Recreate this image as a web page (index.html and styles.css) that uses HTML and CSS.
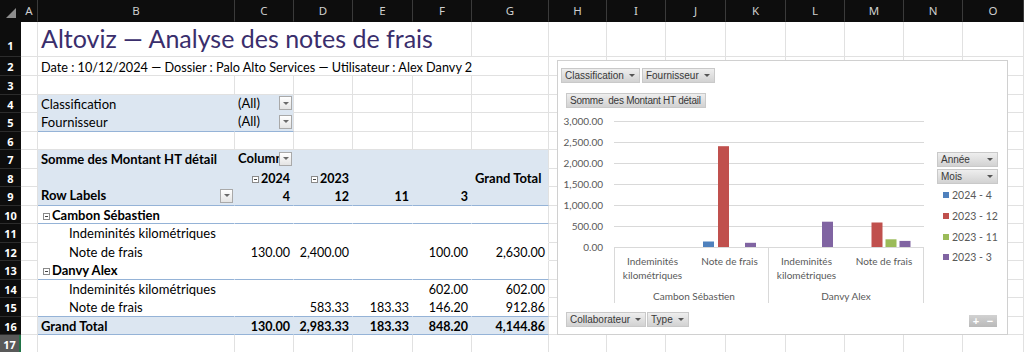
FILE: index.html
```html
<!DOCTYPE html>
<html lang="fr">
<head>
    <meta charset="UTF-8">
    <title>Altoviz — Analyse des notes de frais</title>
    <link rel="stylesheet" href="styles.css">
</head>
<body>

<div class="sheet">

    <div class="row head">
        <div class="corner"></div>
        <div>A</div><div>B</div><div>C</div><div>D</div><div>E</div><div>F</div><div>G</div>
        <div>H</div><div>I</div><div>J</div><div>K</div><div>L</div><div>M</div><div>N</div><div>O</div>
    </div>

    <div class="row r1">
        <div class="rh">1</div>
        <div></div>
        <div class="title">Altoviz — Analyse des notes de frais</div>
        <div></div>
        <div></div><div></div><div></div><div></div><div></div><div></div><div></div><div></div>
    </div>

    <div class="row r2">
        <div class="rh">2</div>
        <div></div>
        <div class="subtitle">Date : 10/12/2024 — Dossier : Palo Alto Services — Utilisateur : Alex Danvy 2</div>
        <div></div><div></div><div></div><div></div><div></div><div></div><div></div><div></div>
    </div>

    <div class="row">
        <div class="rh">3</div>
        <div></div><div></div><div></div><div></div><div></div><div></div><div></div>
        <div></div><div></div><div></div><div></div><div></div><div></div><div></div><div></div>
    </div>

    <div class="row">
        <div class="rh">4</div>
        <div></div>
        <div class="fill">Classification</div>
        <div class="fill pick edge"><span class="pick-text">(All)</span><span class="drop"></span></div>
        <div></div><div></div><div></div><div></div>
        <div></div><div></div><div></div><div></div><div></div><div></div><div></div><div></div>
    </div>

    <div class="row">
        <div class="rh">5</div>
        <div></div>
        <div class="fill line">Fournisseur</div>
        <div class="fill pick edge line"><span class="pick-text">(All)</span><span class="drop"></span></div>
        <div></div><div></div><div></div><div></div>
        <div></div><div></div><div></div><div></div><div></div><div></div><div></div><div></div>
    </div>

    <div class="row">
        <div class="rh">6</div>
        <div></div><div></div><div></div><div></div><div></div><div></div><div></div>
        <div></div><div></div><div></div><div></div><div></div><div></div><div></div><div></div>
    </div>

    <div class="row">
        <div class="rh">7</div>
        <div></div>
        <div class="fill bold">Somme des Montant HT détail</div>
        <div class="fill bold pick"><span class="pick-text">Column Labels</span><span class="drop"></span></div>
        <div class="fill"></div>
        <div class="fill"></div>
        <div class="fill"></div>
        <div class="fill edge"></div>
        <div></div><div></div><div></div><div></div><div></div><div></div><div></div><div></div>
    </div>

    <div class="row">
        <div class="rh">8</div>
        <div></div>
        <div class="fill"></div>
        <div class="fill bold num"><span class="tog"></span>2024</div>
        <div class="fill bold num"><span class="tog"></span>2023</div>
        <div class="fill"></div>
        <div class="fill"></div>
        <div class="fill bold edge">Grand Total</div>
        <div></div><div></div><div></div><div></div><div></div><div></div><div></div><div></div>
    </div>

    <div class="row">
        <div class="rh">9</div>
        <div></div>
        <div class="fill bold pick line"><span class="pick-text">Row Labels</span><span class="drop"></span></div>
        <div class="fill bold num line">4</div>
        <div class="fill bold num line">12</div>
        <div class="fill bold num line">11</div>
        <div class="fill bold num line">3</div>
        <div class="fill line edge"></div>
        <div></div><div></div><div></div><div></div><div></div><div></div><div></div><div></div>
    </div>

    <div class="row">
        <div class="rh">10</div>
        <div></div>
        <div class="body bold line"><span class="tog"></span>Cambon Sébastien</div>
        <div class="body line"></div>
        <div class="body line"></div>
        <div class="body line"></div>
        <div class="body line"></div>
        <div class="body line edge"></div>
        <div></div><div></div><div></div><div></div><div></div><div></div><div></div><div></div>
    </div>

    <div class="row">
        <div class="rh">11</div>
        <div></div>
        <div class="body sub">Indeminités kilométriques</div>
        <div class="body"></div>
        <div class="body"></div>
        <div class="body"></div>
        <div class="body"></div>
        <div class="body edge"></div>
        <div></div><div></div><div></div><div></div><div></div><div></div><div></div><div></div>
    </div>

    <div class="row">
        <div class="rh">12</div>
        <div></div>
        <div class="body sub">Note de frais</div>
        <div class="body num">130.00</div>
        <div class="body num">2,400.00</div>
        <div class="body num"></div>
        <div class="body num">100.00</div>
        <div class="body num edge">2,630.00</div>
        <div></div><div></div><div></div><div></div><div></div><div></div><div></div><div></div>
    </div>

    <div class="row">
        <div class="rh">13</div>
        <div></div>
        <div class="body bold line"><span class="tog"></span>Danvy Alex</div>
        <div class="body line"></div>
        <div class="body line"></div>
        <div class="body line"></div>
        <div class="body line"></div>
        <div class="body line edge"></div>
        <div></div><div></div><div></div><div></div><div></div><div></div><div></div><div></div>
    </div>

    <div class="row">
        <div class="rh">14</div>
        <div></div>
        <div class="body sub">Indeminités kilométriques</div>
        <div class="body num"></div>
        <div class="body num"></div>
        <div class="body num"></div>
        <div class="body num">602.00</div>
        <div class="body num edge">602.00</div>
        <div></div><div></div><div></div><div></div><div></div><div></div><div></div><div></div>
    </div>

    <div class="row">
        <div class="rh">15</div>
        <div></div>
        <div class="body sub line">Note de frais</div>
        <div class="body num line"></div>
        <div class="body num line">583.33</div>
        <div class="body num line">183.33</div>
        <div class="body num line">146.20</div>
        <div class="body num line edge">912.86</div>
        <div></div><div></div><div></div><div></div><div></div><div></div><div></div><div></div>
    </div>

    <div class="row">
        <div class="rh">16</div>
        <div></div>
        <div class="fill bold line">Grand Total</div>
        <div class="fill bold num line">130.00</div>
        <div class="fill bold num line">2,983.33</div>
        <div class="fill bold num line">183.33</div>
        <div class="fill bold num line">848.20</div>
        <div class="fill bold num line edge">4,144.86</div>
        <div></div><div></div><div></div><div></div><div></div><div></div><div></div><div></div>
    </div>

    <div class="row">
        <div class="rh on">17</div>
        <div></div><div></div><div></div><div></div><div></div><div></div><div></div>
        <div></div><div></div><div></div><div></div><div></div><div></div><div></div><div></div>
    </div>

    <!-- pivot chart floats over the sheet -->
    <div class="chart">
        <div class="chart-filters">
            <span class="field">Classification<i class="arrow"></i></span>
            <span class="field">Fournisseur<i class="arrow"></i></span>
        </div>
        <div class="chart-value">
            <span class="field tight">Somme  des Montant HT détail</span>
        </div>
        <div class="chart-body">
            <svg class="plot" width="370" height="196" viewBox="0 0 370 196">
                <g stroke="#d9d9d9" stroke-width="1">
                    <line x1="56" y1="11.5" x2="366" y2="11.5"/>
                    <line x1="56" y1="32.5" x2="366" y2="32.5"/>
                    <line x1="56" y1="53.5" x2="366" y2="53.5"/>
                    <line x1="56" y1="74.5" x2="366" y2="74.5"/>
                    <line x1="56" y1="95.5" x2="366" y2="95.5"/>
                    <line x1="56" y1="116.5" x2="366" y2="116.5"/>
                    <line x1="56" y1="137.5" x2="366" y2="137.5"/>
                    <line x1="56.5" y1="137" x2="56.5" y2="193"/>
                    <line x1="210.5" y1="137" x2="210.5" y2="193"/>
                    <line x1="365.5" y1="137" x2="365.5" y2="193"/>
                </g>
                <g class="axis" text-anchor="end">
                    <text x="45" y="15">3,000.00</text>
                    <text x="45" y="36">2,500.00</text>
                    <text x="45" y="57">2,000.00</text>
                    <text x="45" y="78">1,500.00</text>
                    <text x="45" y="99">1,000.00</text>
                    <text x="45" y="120">500.00</text>
                    <text x="45" y="141">0.00</text>
                </g>
                <!-- Cambon Sébastien / Note de frais -->
                <rect x="145" y="131.5" width="11" height="5.5" fill="#4f81bd"/>
                <rect x="160" y="36.2" width="11" height="100.8" fill="#c0504d"/>
                <rect x="187" y="132.8" width="11" height="4.2" fill="#8064a2"/>
                <!-- Danvy Alex / Indeminités kilométriques -->
                <rect x="264" y="111.7" width="11" height="25.3" fill="#8064a2"/>
                <!-- Danvy Alex / Note de frais -->
                <rect x="313.5" y="112.5" width="11" height="24.5" fill="#c0504d"/>
                <rect x="327.5" y="129.3" width="11" height="7.7" fill="#9bbb59"/>
                <rect x="341.5" y="130.9" width="11" height="6.1" fill="#8064a2"/>
                <g class="axis" text-anchor="middle">
                    <text x="94.5" y="155">Indeminités</text>
                    <text x="94.5" y="169">kilométriques</text>
                    <text x="171.5" y="155">Note de frais</text>
                    <text x="248.5" y="155">Indeminités</text>
                    <text x="248.5" y="169">kilométriques</text>
                    <text x="326" y="155">Note de frais</text>
                    <text x="136" y="190">Cambon Sébastien</text>
                    <text x="288" y="190">Danvy Alex</text>
                </g>
            </svg>
            <div class="legend">
                <span class="field">Année<i class="arrow"></i></span>
                <span class="field">Mois<i class="arrow"></i></span>
                <div class="key"><i class="swatch blue"></i>2024 - 4</div>
                <div class="key"><i class="swatch red"></i>2023 - 12</div>
                <div class="key"><i class="swatch green"></i>2023 - 11</div>
                <div class="key"><i class="swatch purple"></i>2023 - 3</div>
            </div>
        </div>
        <div class="chart-foot">
            <span class="field">Collaborateur<i class="arrow"></i></span>
            <span class="field">Type<i class="arrow"></i></span>
            <span class="zoom"><b>+</b><b>−</b></span>
        </div>
    </div>

</div>

</body>
</html>
```

FILE: styles.css
```css
body {
    margin: 0;
    background-color: #fff;
    font-family: Lato, "Liberation Sans", sans-serif;
    color: #000;
}

.sheet {
    position: relative;
    width: 1024px;
    height: 352px;
    overflow: hidden;
}

/* spreadsheet grid */

.row {
    display: grid;
    grid-template-columns: 21px 17px 197px 59px 59px 60px 59px 77px 58px 59px 60px 60px 59px 59px 59px 61px;
    height: 18.5px;
}

.row > div {
    box-sizing: border-box;
    border-right: 1px solid #e1e1e1;
    border-bottom: 1px solid #e1e1e1;
    padding: 1px 3px 0;
    font-size: 13px;
    line-height: 17px;
    white-space: nowrap;
    overflow: hidden;
}

.head {
    height: 22px;
}

.head > div {
    background-color: #0d0d0d;
    border-right-color: #3a3a3a;
    border-bottom-color: #0d0d0d;
    color: #cfcfcf;
    font-family: "Noto Sans", sans-serif;
    font-size: 11.5px;
    line-height: 21px;
    text-align: center;
    padding: 0;
}

.head > .corner {
    display: flex;
    justify-content: flex-end;
    align-items: flex-end;
    padding: 0 4px 3px 0;
    border-right-color: #0d0d0d;
}

.corner::after {
    content: "";
    width: 0;
    height: 0;
    border-left: 10px solid transparent;
    border-bottom: 10px solid #8c8c8c;
}

.row > .rh {
    background-color: #0d0d0d;
    border-right: none;
    border-bottom-color: #2c2c2c;
    color: #fff;
    font-family: "Noto Sans", sans-serif;
    font-size: 11px;
    font-weight: 700;
    text-align: center;
    padding: 1px 0 0;
}

.row > .rh.on {
    background-color: #595959;
    border-right: 2px solid #217346;
}

.r1 {
    height: 35px;
}

.r1 > .rh {
    padding-top: 15px;
}

.r2 {
    height: 19px;
}

.r2 > div {
    padding-top: 2px;
}

.row > .title {
    grid-column: span 5;
    font-size: 25px;
    line-height: 30px;
    padding-top: 1px;
    color: #3a2e6c;
    overflow: visible;
}

.row > .subtitle {
    grid-column: span 6;
    font-size: 12.7px;
}

/* pivot table */

.fill {
    background-color: #dce6f1;
}

.body {
    background-color: #fff;
}

.row > .fill,
.row > .body {
    border-color: transparent;
}

.row > .edge {
    border-right-color: #e1e1e1;
}

.row > .line {
    border-bottom-color: #95b3d7;
}

.row > .num {
    text-align: right;
    font-size: 12.5px;
}

.bold {
    font-weight: 700;
}

.row > .sub {
    padding-left: 31px;
}

.row > .pick {
    display: flex;
    align-items: center;
    padding: 0 1px 0 3px;
}

.pick-text {
    flex: 1;
    overflow: hidden;
}

.drop {
    display: flex;
    justify-content: center;
    align-items: center;
    flex: none;
    width: 13px;
    height: 14px;
    box-sizing: border-box;
    border: 1px solid #a9a9a9;
    background: linear-gradient(#ffffff, #e4e4e4);
}

.drop::after {
    content: "";
    border-left: 3px solid transparent;
    border-right: 3px solid transparent;
    border-top: 3px solid #6a6a6a;
}

.tog {
    display: inline-block;
    width: 5px;
    height: 5px;
    margin: 0 2px;
    border: 1px solid #8a8a8a;
    background: linear-gradient(#444, #444) no-repeat center / 3px 1px, #fff;
}

/* pivot chart */

.chart {
    position: absolute;
    left: 557px;
    top: 60px;
    width: 451px;
    height: 275px;
    box-sizing: border-box;
    border: 1px solid #d0d0d0;
    background-color: #fff;
    font-family: "Liberation Sans", Arial, sans-serif;
}

.field {
    display: inline-flex;
    align-items: center;
    gap: 5px;
    height: 15px;
    box-sizing: border-box;
    padding: 0 4px 0 3px;
    border: 1px solid #c9c9c9;
    background: linear-gradient(#eeeeee, #d2d2d2);
    font-size: 10px;
    color: #383838;
    white-space: pre;
}

.field.tight {
    letter-spacing: -0.25px;
}

.arrow {
    width: 0;
    height: 0;
    border-left: 3px solid transparent;
    border-right: 3px solid transparent;
    border-top: 3px solid #555;
}

.chart-filters {
    display: flex;
    gap: 2px;
    padding: 7px 0 0 3px;
}

.chart-value {
    display: flex;
    padding: 10px 0 0 8px;
}

.chart-body {
    display: flex;
    margin-top: 2px;
}

.plot {
    display: block;
    flex: none;
}

.axis {
    font-family: Lato, sans-serif;
    font-size: 10px;
    fill: #595959;
}

.legend {
    display: flex;
    flex-direction: column;
    gap: 2px;
    width: 61px;
    margin: 42px 0 0 9px;
}

.legend .field {
    justify-content: space-between;
}

.key {
    display: flex;
    align-items: center;
    gap: 3px;
    height: 18.7px;
    padding-left: 6px;
    font-family: Lato, sans-serif;
    font-size: 10.5px;
    color: #595959;
}

.swatch {
    width: 6px;
    height: 6px;
}

.blue { background-color: #4f81bd; }
.red { background-color: #c0504d; }
.green { background-color: #9bbb59; }
.purple { background-color: #8064a2; }

.chart-foot {
    display: flex;
    align-items: flex-end;
    gap: 1px;
    padding: 6px 0 0 8px;
}

.zoom {
    display: flex;
    margin: 0 10px 0 auto;
}

.zoom b {
    width: 14px;
    height: 12px;
    background: linear-gradient(#d2d2d2, #b9b9b9);
    color: #fff;
    font-size: 11px;
    line-height: 12px;
    text-align: center;
}
```
